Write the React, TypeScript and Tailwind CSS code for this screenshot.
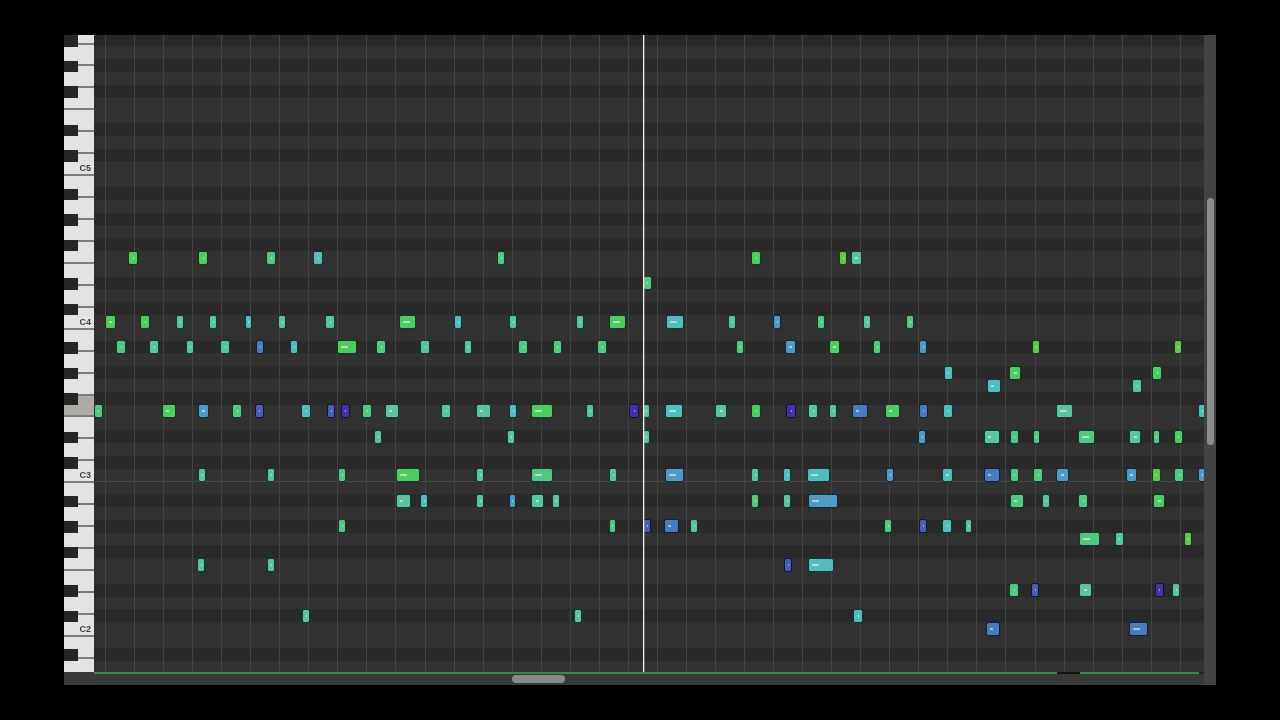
import React from 'react'

// g green, k green-mint, m mint, t teal, b blue, d deep blue, i indigo, v violet, y yellow-green
const noteColors: Record<string, string> = {
  g: 'bg-[#4fcb63] outline-[#123a1c]',
  k: 'bg-[#58c588] outline-[#123a24]',
  m: 'bg-[#5cc2a0] outline-[#123a30]',
  t: 'bg-[#55bdb9] outline-[#10353a]',
  b: 'bg-[#5199c0] outline-[#0f2c40]',
  d: 'bg-[#4a7cbc] outline-[#0f2040]',
  i: 'bg-[#4c5cb0] outline-[#12163f]',
  v: 'bg-[#4433a8] outline-[#15103a]',
  y: 'bg-[#62c452] outline-[#1c3a12]',
}

type Note = [number, number, string]

// center y of the row -> [left x, width, colour]
const noteRows: [number, Note[]][] = [
  [258, [[129, 8, 'g'], [199, 7, 'g'], [267, 7, 'k'], [314, 8, 't'], [498, 5, 'k'], [752, 8, 'g'], [840, 5, 'y'], [852, 9, 'm']]],
  [283, [[644, 6, 'k']]],
  [321.5, [[106, 9, 'g'], [141, 7, 'g'], [177, 5, 'm'], [210, 5, 'm'], [246, 4, 't'], [279, 5, 'm'], [326, 7, 'm'], [400, 15, 'g'], [455, 5, 't'], [510, 5, 'm'], [577, 5, 'm'], [610, 15, 'g'], [667, 16, 't'], [729, 5, 'm'], [774, 5, 'b'], [818, 5, 'k'], [864, 5, 'm'], [907, 5, 'k']]],
  [347, [[117, 7, 'k'], [150, 7, 'm'], [187, 5, 'm'], [221, 8, 'm'], [257, 5, 'd'], [291, 5, 't'], [338, 18, 'g'], [377, 7, 'k'], [421, 8, 'm'], [465, 5, 'm'], [519, 7, 'k'], [554, 6, 'k'], [598, 8, 'k'], [737, 5, 'k'], [786, 9, 'b'], [830, 9, 'g'], [874, 5, 'k'], [920, 5, 'b'], [1033, 5, 'y'], [1175, 5, 'y']]],
  [373, [[945, 6, 't'], [1010, 10, 'g'], [1153, 7, 'g']]],
  [385.5, [[988, 12, 't'], [1133, 7, 'm']]],
  [411, [[95, 6, 'k'], [163, 12, 'g'], [199, 9, 'b'], [233, 8, 'k'], [256, 6, 'i'], [302, 8, 't'], [328, 5, 'i'], [342, 6, 'v'], [363, 8, 'k'], [386, 12, 'm'], [442, 8, 'm'], [477, 13, 'm'], [510, 5, 't'], [532, 20, 'g'], [587, 5, 'm'], [630, 7, 'v'], [644, 4, 'm'], [666, 16, 't'], [716, 10, 'm'], [752, 7, 'g'], [787, 7, 'v'], [809, 7, 'm'], [830, 5, 'm'], [853, 14, 'd'], [886, 13, 'g'], [920, 6, 'd'], [944, 8, 't'], [1057, 15, 'm'], [1199, 5, 't']]],
  [436.5, [[375, 5, 'm'], [508, 5, 'm'], [644, 4, 'm'], [919, 5, 'b'], [985, 14, 'm'], [1011, 6, 'k'], [1034, 4, 'k'], [1079, 15, 'k'], [1130, 10, 'm'], [1154, 4, 'k'], [1175, 6, 'g']]],
  [475, [[199, 5, 'm'], [268, 5, 'm'], [339, 5, 'k'], [397, 22, 'g'], [477, 5, 'm'], [532, 20, 'k'], [610, 5, 'm'], [666, 17, 'b'], [752, 5, 'm'], [784, 5, 't'], [808, 21, 't'], [887, 5, 'b'], [943, 9, 't'], [985, 14, 'd'], [1011, 6, 'k'], [1034, 7, 'k'], [1057, 11, 'b'], [1127, 9, 'b'], [1153, 6, 'y'], [1175, 8, 'k'], [1199, 5, 'b']]],
  [500.5, [[397, 13, 'm'], [421, 5, 't'], [477, 5, 'm'], [510, 4, 'b'], [532, 11, 'm'], [553, 5, 'm'], [752, 5, 'k'], [784, 5, 'm'], [809, 28, 'b'], [1011, 12, 'k'], [1043, 5, 'm'], [1079, 7, 'k'], [1154, 10, 'g']]],
  [526, [[339, 5, 'k'], [610, 4, 'k'], [644, 5, 'i'], [665, 13, 'd'], [691, 5, 'm'], [885, 5, 'k'], [920, 5, 'i'], [943, 8, 't'], [966, 4, 'm']]],
  [539, [[1080, 19, 'k'], [1116, 6, 'm'], [1185, 5, 'y']]],
  [564.5, [[198, 5, 'm'], [268, 5, 'm'], [785, 5, 'i'], [809, 24, 't']]],
  [590, [[1010, 7, 'k'], [1032, 5, 'i'], [1080, 11, 'm'], [1156, 6, 'v'], [1173, 5, 'm']]],
  [615.5, [[303, 5, 'm'], [575, 5, 'm'], [854, 8, 't']]],
  [628.5, [[987, 12, 'd'], [1130, 17, 'd']]],
]

// semitone index below A#5, black keys of the roll
const isBlack = (i: number) => [0, 2, 4, 7, 9].includes(((i % 12) + 12) % 12)

const whiteKeys = Array.from({ length: 30 }, (_, i) => i)
const keyLabels: Record<number, string> = { 6: 'C5', 13: 'C4', 20: 'C3', 27: 'C2' }

const PianoKeys: React.FC = () => (
  <div className="relative w-[30px] shrink-0 overflow-hidden bg-[#e3e3e6]">
    <div className="flex flex-col">
      {whiteKeys.map((k) => (
        <div
          key={k}
          className={`flex shrink-0 items-end justify-end border-b-2 border-[#7c7c7c] pr-[3px] ${k === 0 ? 'h-[9.5px]' : 'h-[21.94px]'} ${k === 17 ? 'bg-[#aeaaa6]' : ''}`}
        >
          {keyLabels[k] && (
            <span className="text-[9px] leading-[11px] font-bold text-[#3f3f3f]">{keyLabels[k]}</span>
          )}
        </div>
      ))}
    </div>
    <div className="absolute inset-0 flex flex-col">
      {Array.from({ length: 50 }, (_, i) => (
        <div key={i} className="h-[12.8px] w-[14px] shrink-0">
          {isBlack(i) && <div className="h-[11.5px] w-full bg-[#262626]" />}
        </div>
      ))}
    </div>
  </div>
)

const NoteBlock: React.FC<{ x: number; y: number; w: number; c: string }> = ({ x, y, w, c }) => (
  <div
    className={`absolute flex h-[12px] items-center rounded-[1px] outline-1 ${noteColors[c]} ${w >= 12 ? 'justify-start pl-[3px]' : 'justify-center'}`}
    style={{ left: x - 94, top: y - 35 - 6, width: w < 8 ? w + 1 : w }}
  >
    <div
      className="h-[2px] bg-white/50"
      style={{ width: w >= 15 ? 7 : w >= 9 ? 3 : 1 }}
    />
  </div>
)

const RollGrid: React.FC = () => (
  <div className="relative flex-1 overflow-hidden bg-[#303030]">
    {/* row bands, C3 gets a thin line */}
    <div className="-mt-[1.5px] flex flex-col">
      {Array.from({ length: 51 }, (_, i) => {
        const semi = ((22 - i) % 12 + 12) % 12
        const black = [1, 3, 6, 8, 10].includes(semi)
        return (
          <div
            key={i}
            className={`h-[12.8px] shrink-0 ${black ? 'bg-[#292929]' : 'bg-[#313131]'} ${i === 35 ? 'border-t border-[#474747]' : ''}`}
          />
        )
      })}
    </div>

    {/* bar lines */}
    <div className="absolute inset-0 flex pl-[11px]">
      {Array.from({ length: 38 }, (_, i) => (
        <div key={i} className="w-[29.05px] shrink-0 border-l border-[#424242]" />
      ))}
    </div>

    {noteRows.map(([y, notes]) =>
      notes.map(([x, w, c]) => <NoteBlock key={`${y}-${x}`} x={x} y={y} w={w} c={c} />)
    )}

    {/* playhead */}
    <div className="absolute top-0 bottom-0 left-[549px] w-px bg-[#f0f0f0] shadow-[1px_0_0_rgba(230,230,230,0.35)]" />
  </div>
)

const App: React.FC = () => {
  return (
    <div className="h-screen overflow-hidden bg-black pt-[35px] pl-[64px] font-['Liberation_Sans',Arial,sans-serif]">
      <div className="flex h-[650px] w-[1152px] blur-[0.4px]">
        <div className="flex w-[1140px] flex-col">
          <div className="flex h-[637px]">
            <PianoKeys />
            <RollGrid />
          </div>
          <div className="flex-1 bg-[#393939]">
            <div className="ml-[30px] flex h-[2px]">
              <div className="w-[963px] bg-[#44804c]" />
              <div className="w-[23px] bg-[#141414]" />
              <div className="w-[119px] bg-[#44804c]" />
              <div className="w-[5px] bg-[#143018]" />
            </div>
            <div className="mt-[1px] ml-[448px] h-[8px] w-[53px] rounded-full bg-[#8a8a8a]" />
          </div>
        </div>
        <div className="w-[12px] bg-[#434343] pt-[163px] pl-[3px]">
          <div className="h-[247px] w-[7px] rounded-full bg-[#8c8c8c]" />
        </div>
      </div>
    </div>
  )
}

export default App
